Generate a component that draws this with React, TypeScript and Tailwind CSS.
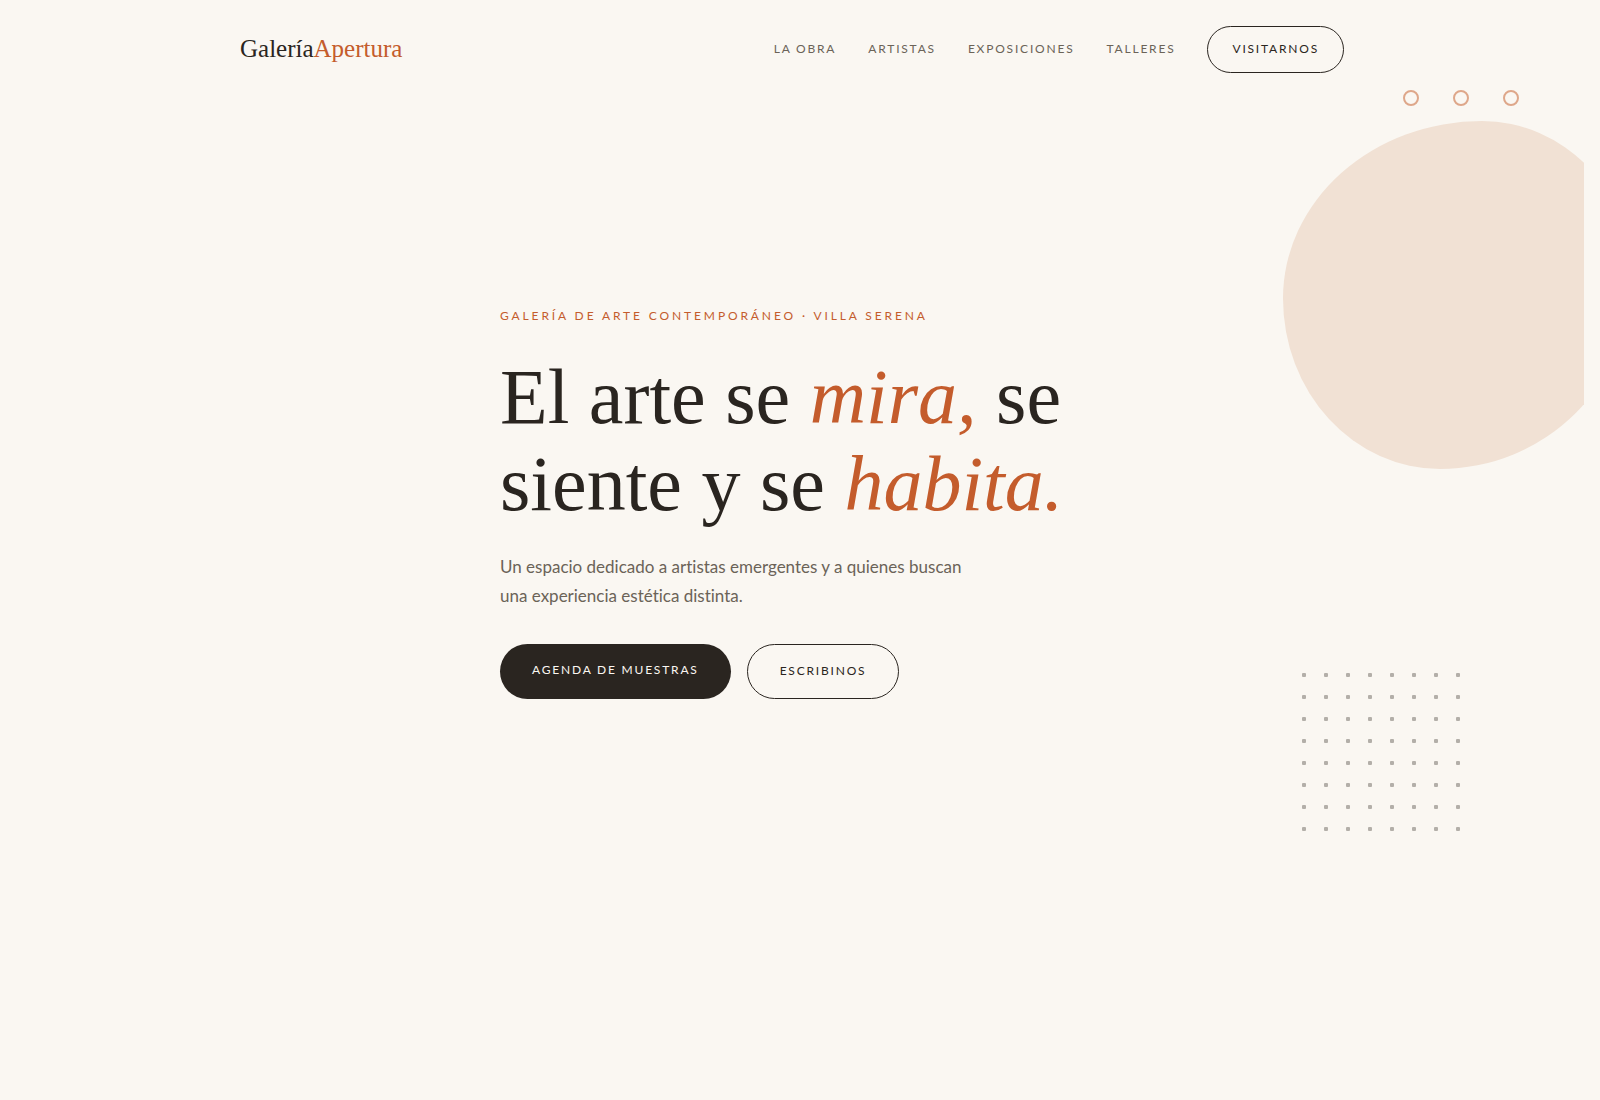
const navLinks = [
  { label: "La obra", href: "#obra" },
  { label: "Artistas", href: "#artistas" },
  { label: "Exposiciones", href: "#exposiciones" },
  { label: "Talleres", href: "#talleres" },
];

const RINGS = [0, 1, 2];
const DOTS = Array.from({ length: 64 }, (_, i) => i);

function Header() {
  return (
    <header className="relative z-10 mx-auto flex w-full max-w-[1200px] items-center justify-between px-12 py-[26px]">
      <a
        href="#inicio"
        className="pb-0.5 font-['Liberation_Serif',serif] text-[25px] leading-8 text-[#2a2520]"
      >
        Galería<span className="text-[#c45c2c]">Apertura</span>
      </a>
      <nav
        aria-label="Principal"
        className="flex items-center gap-8 text-xs leading-[18px] tracking-[0.15em] text-[#6b6358] uppercase"
      >
        {navLinks.map((link) => (
          <a key={link.href} href={link.href} className="pb-px">
            {link.label}
          </a>
        ))}
        <a
          href="#visitarnos"
          className="rounded-full border border-[#2a2520] px-6 pt-[13px] pb-[14px] text-[#2a2520]"
        >
          Visitarnos
        </a>
      </nav>
    </header>
  );
}

function Decorations() {
  return (
    <div aria-hidden="true" className="pointer-events-none absolute inset-0 overflow-hidden">
      <div className="absolute top-[121px] -right-12 h-[348px] w-[349px] rounded-[57%_43%_55%_45%/51%_45%_55%_49%] bg-[#f1e1d4]" />
      <div className="absolute top-[90px] right-[65px] flex gap-[34px]">
        {RINGS.map((i) => (
          <span key={i} className="size-4 rounded-full border-2 border-[#dea78a]" />
        ))}
      </div>
      <div className="absolute top-[673px] right-[124px] grid grid-cols-8 gap-[18px]">
        {DOTS.map((i) => (
          <span key={i} className="size-1 rounded-[1px] bg-[#b3afa9]" />
        ))}
      </div>
    </div>
  );
}

function Hero() {
  return (
    <main className="relative z-10 mx-auto w-full max-w-[680px] px-12 pt-[208px]">
      <p className="text-xs leading-[18px] tracking-[0.24em] text-[#c45c2c] uppercase">
        Galería de arte contemporáneo · Villa Serena
      </p>
      <h1 className="mt-7 font-['Liberation_Serif',serif] text-[78px] leading-[87px] text-[#2a2520]">
        El arte se <em className="text-[#c45c2c]">mira,</em> se siente y se{" "}
        <em className="text-[#c45c2c]">habita.</em>
      </h1>
      <p className="mt-[25px] max-w-[480px] text-[17px] leading-[29px] text-[#6b6358]">
        Un espacio dedicado a artistas emergentes y a quienes buscan una experiencia estética
        distinta.
      </p>
      <div className="mt-[34px] flex gap-4 text-xs leading-[19px] tracking-[0.15em] uppercase">
        <a href="#agenda" className="rounded-full bg-[#2a2520] px-8 pt-4 pb-5 text-[#faf7f2]">
          Agenda de muestras
        </a>
        <a
          href="#contacto"
          className="rounded-full border border-[#2a2520] px-8 pt-4 pb-[18px] text-[#2a2520]"
        >
          Escribinos
        </a>
      </div>
    </main>
  );
}

export default function App() {
  return (
    <div className="min-h-screen bg-[#faf7f2] pr-4 font-[Lato,sans-serif] [font-variant-ligatures:none]">
      <div className="relative min-h-screen">
        <Decorations />
        <Header />
        <Hero />
      </div>
    </div>
  );
}
